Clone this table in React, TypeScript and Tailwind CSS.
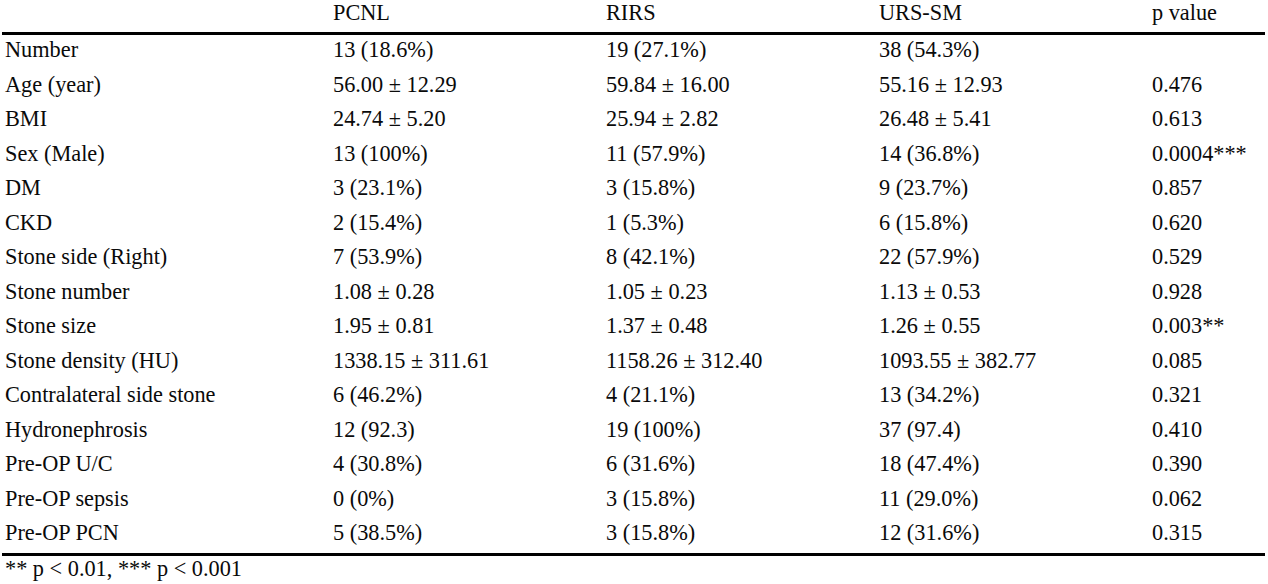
import React from "react";

const rows: [string, string, string, string, string][] = [
  ["Number", "13 (18.6%)", "19 (27.1%)", "38 (54.3%)", ""],
  ["Age (year)", "56.00 ± 12.29", "59.84 ± 16.00", "55.16 ± 12.93", "0.476"],
  ["BMI", "24.74 ± 5.20", "25.94 ± 2.82", "26.48 ± 5.41", "0.613"],
  ["Sex (Male)", "13 (100%)", "11 (57.9%)", "14 (36.8%)", "0.0004***"],
  ["DM", "3 (23.1%)", "3 (15.8%)", "9 (23.7%)", "0.857"],
  ["CKD", "2 (15.4%)", "1 (5.3%)", "6 (15.8%)", "0.620"],
  ["Stone side (Right)", "7 (53.9%)", "8 (42.1%)", "22 (57.9%)", "0.529"],
  ["Stone number", "1.08 ± 0.28", "1.05 ± 0.23", "1.13 ± 0.53", "0.928"],
  ["Stone size", "1.95 ± 0.81", "1.37 ± 0.48", "1.26 ± 0.55", "0.003**"],
  ["Stone density (HU)", "1338.15 ± 311.61", "1158.26 ± 312.40", "1093.55 ± 382.77", "0.085"],
  ["Contralateral side stone", "6 (46.2%)", "4 (21.1%)", "13 (34.2%)", "0.321"],
  ["Hydronephrosis", "12 (92.3)", "19 (100%)", "37 (97.4)", "0.410"],
  ["Pre-OP U/C", "4 (30.8%)", "6 (31.6%)", "18 (47.4%)", "0.390"],
  ["Pre-OP sepsis", "0 (0%)", "3 (15.8%)", "11 (29.0%)", "0.062"],
  ["Pre-OP PCN", "5 (38.5%)", "3 (15.8%)", "12 (31.6%)", "0.315"],
];

const grid = "grid grid-cols-[328px_273px_273px_273px_1fr] pl-[3px]";

export default function App() {
  return (
    <div
      className="w-[1268px] h-[584px] bg-white text-[#0a0a0a] text-[22.3px] leading-[24px] overflow-hidden"
      style={{ fontFamily: '"Liberation Serif", "Times New Roman", serif' }}
    >
      <div className="ml-[2px] w-[1263px]">
        <div className={`${grid} h-[32px] pt-[1px]`}>
          <div></div>
          <div>PCNL</div>
          <div>RIRS</div>
          <div>URS-SM</div>
          <div>p value</div>
        </div>
        <div className="border-t-[3px] border-black">
          {rows.map((r, i) => (
            <div key={i} className={`${grid} h-[34.5px] pt-[3px]`}>
              {r.map((c, j) => (
                <div key={j} className="whitespace-nowrap">
                  {c}
                </div>
              ))}
            </div>
          ))}
        </div>
        <div className="border-t-[3px] border-black pl-[3px] pt-[1px]">
          ** p &lt; 0.01, *** p &lt; 0.001
        </div>
      </div>
    </div>
  );
}
